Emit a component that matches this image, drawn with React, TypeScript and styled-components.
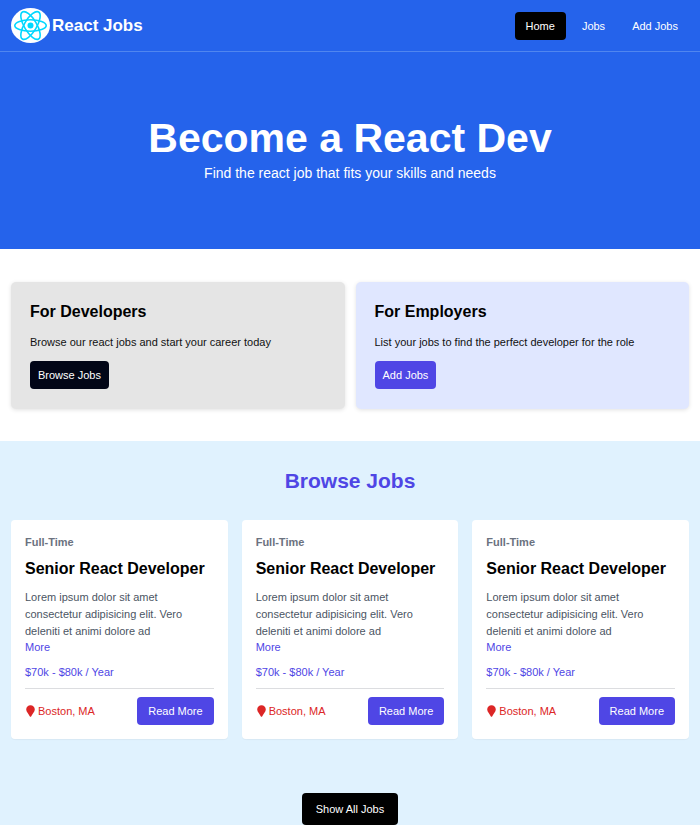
import React from "react";
import styled, { createGlobalStyle, css } from "styled-components";

const GlobalStyle = createGlobalStyle`
  *, *::before, *::after { box-sizing: border-box; }
  body {
    margin: 0;
    background: #ffffff;
    color: #000000;
    font-family: "Liberation Sans", Arial, sans-serif;
    font-size: 11px;
    line-height: 16px;
  }
  h1, h2, h3, p { margin: 0; }
  a { text-decoration: none; }
`;

const NavBar = styled.nav`
  display: flex;
  align-items: center;
  justify-content: space-between;
  height: 52px;
  padding: 0 11px;
  background: #2563eb;
  border-bottom: 1px solid #5086ef;
`;

const Brand = styled.a`
  display: flex;
  align-items: center;
  gap: 2px;
  color: #ffffff;
  font-size: 17px;
  line-height: 24px;
  font-weight: 700;
`;

const NavLinks = styled.div`
  display: flex;
  gap: 5px;
`;

const NavLink = styled.a<{ $active?: boolean }>`
  padding: 6px 11px;
  border-radius: 4px;
  color: #ffffff;
  background: ${(p) => (p.$active ? "#000000" : "transparent")};
`;

const Hero = styled.header`
  display: flex;
  flex-direction: column;
  align-items: center;
  padding: 62px 11px 64px;
  background: #2563eb;
  color: #ffffff;
  text-align: center;
`;

const HeroTitle = styled.h1`
  font-size: 41px;
  line-height: 48px;
  font-weight: 700;
`;

const HeroText = styled.p`
  font-size: 14px;
  line-height: 23px;
`;

const Audiences = styled.section`
  display: grid;
  grid-template-columns: 1fr 1fr;
  gap: 11px;
  padding: 33px 11px 32px;
`;

const AudienceCard = styled.article<{ $tone: string }>`
  display: flex;
  flex-direction: column;
  align-items: flex-start;
  padding: 19px 19px 20px;
  border-radius: 5px;
  background: ${(p) => p.$tone};
  box-shadow: 0 1px 4px rgba(0, 0, 0, 0.12);
`;

const CardTitle = styled.h2`
  font-size: 16px;
  line-height: 22px;
  font-weight: 700;
`;

const AudienceText = styled.p`
  margin: 11px 0;
  color: #111111;
`;

const linkButton = css`
  display: inline-block;
  padding: 6px 8px;
  border-radius: 4px;
  color: #ffffff;
`;

const ActionLink = styled.a<{ $tone: string }>`
  ${linkButton}
  background: ${(p) => p.$tone};
`;

const Jobs = styled.section`
  padding: 28px 11px 0;
  background: #e0f2fe;
`;

const JobsTitle = styled.h2`
  margin-bottom: 27px;
  color: #4f46e5;
  font-size: 21px;
  line-height: 24px;
  font-weight: 700;
  text-align: center;
`;

const JobGrid = styled.div`
  display: grid;
  grid-template-columns: repeat(3, 1fr);
  gap: 14px;
`;

const JobCard = styled.article`
  display: flex;
  flex-direction: column;
  align-items: flex-start;
  padding: 14px;
  border-radius: 4px;
  background: #ffffff;
  box-shadow: 0 1px 1px rgba(0, 0, 0, 0.04);
`;

const JobType = styled.p`
  margin-bottom: 8px;
  color: #6b7280;
  font-weight: 700;
`;

const JobText = styled.p`
  margin-top: 9px;
  line-height: 17px;
  color: #4b5563;
`;

const MoreButton = styled.button`
  padding: 0;
  border: 0;
  background: none;
  color: #4f46e5;
  font: inherit;
  line-height: 14px;
  cursor: pointer;
`;

const Salary = styled.p`
  margin: 10px 0 8px;
  color: #4f46e5;
`;

const JobFooter = styled.div`
  display: flex;
  align-items: center;
  justify-content: space-between;
  align-self: stretch;
  padding-top: 8px;
  border-top: 1px solid #dcdde0;
`;

const Location = styled.div`
  display: flex;
  align-items: center;
  gap: 3px;
  color: #dc2626;

  svg { margin-left: 1px; }
`;

const ReadMore = styled.a`
  ${linkButton}
  padding: 6px 11px;
  background: #4f46e5;
`;

const ShowAll = styled.div`
  display: flex;
  justify-content: center;
  padding-top: 54px;
`;

const ShowAllLink = styled.a`
  ${linkButton}
  padding: 8px 14px;
  background: #000000;
`;

const ReactLogo = () => (
  <svg width="39" height="35" viewBox="0 0 39 35" aria-hidden="true">
    <ellipse cx="19.5" cy="17.5" rx="19.5" ry="17.5" fill="#ffffff" />
    <g fill="none" stroke="#00d8ff" strokeWidth="1.6">
      <ellipse cx="19.5" cy="17.5" rx="15.7" ry="5.7" />
      <ellipse cx="19.5" cy="17.5" rx="15.7" ry="6.2" transform="rotate(59 19.5 17.5)" />
      <ellipse cx="19.5" cy="17.5" rx="15.7" ry="6.2" transform="rotate(121 19.5 17.5)" />
    </g>
    <circle cx="19.5" cy="17.5" r="3" fill="#00d8ff" />
  </svg>
);

const PinIcon = () => (
  <svg width="9" height="12" viewBox="0 0 9 12" aria-hidden="true">
    <path
      d="M4.5 0.3C2.1 0.3 0.2 2.2 0.2 4.6C0.2 7 2.6 8.9 3.7 11.3Q4.5 12.3 5.3 11.3C6.4 8.9 8.8 7 8.8 4.6C8.8 2.2 6.9 0.3 4.5 0.3Z"
      fill="#dc2626"
    />
  </svg>
);

const jobs = [1, 2, 3].map((id) => ({
  id,
  type: "Full-Time",
  title: "Senior React Developer",
  description: "Lorem ipsum dolor sit amet consectetur adipisicing elit. Vero deleniti et animi dolore ad",
  salary: "$70k - $80k / Year",
  location: "Boston, MA",
}));

export default function App() {
  return (
    <>
      <GlobalStyle />
      <NavBar>
        <Brand href="#home">
          <ReactLogo />
          <span>React Jobs</span>
        </Brand>
        <NavLinks>
          <NavLink href="#home" $active aria-current="page">Home</NavLink>
          <NavLink href="#jobs">Jobs</NavLink>
          <NavLink href="#add-job">Add Jobs</NavLink>
        </NavLinks>
      </NavBar>
      <Hero>
        <HeroTitle>Become a React Dev</HeroTitle>
        <HeroText>Find the react job that fits your skills and needs</HeroText>
      </Hero>
      <main>
        <Audiences>
          <AudienceCard $tone="#e5e5e5">
            <CardTitle>For Developers</CardTitle>
            <AudienceText>Browse our react jobs and start your career today</AudienceText>
            <ActionLink href="#jobs" $tone="#020617">Browse Jobs</ActionLink>
          </AudienceCard>
          <AudienceCard $tone="#e0e7ff">
            <CardTitle>For Employers</CardTitle>
            <AudienceText>List your jobs to find the perfect developer for the role</AudienceText>
            <ActionLink href="#add-job" $tone="#4f46e5">Add Jobs</ActionLink>
          </AudienceCard>
        </Audiences>
        <Jobs id="jobs">
          <JobsTitle>Browse Jobs</JobsTitle>
          <JobGrid>
            {jobs.map((job) => (
              <JobCard key={job.id}>
                <JobType>{job.type}</JobType>
                <CardTitle as="h3">{job.title}</CardTitle>
                <JobText>{job.description}</JobText>
                <MoreButton type="button">More</MoreButton>
                <Salary>{job.salary}</Salary>
                <JobFooter>
                  <Location>
                    <PinIcon />
                    <span>{job.location}</span>
                  </Location>
                  <ReadMore href={`#job-${job.id}`}>Read More</ReadMore>
                </JobFooter>
              </JobCard>
            ))}
          </JobGrid>
          <ShowAll>
            <ShowAllLink href="#jobs">Show All Jobs</ShowAllLink>
          </ShowAll>
        </Jobs>
      </main>
    </>
  );
}
